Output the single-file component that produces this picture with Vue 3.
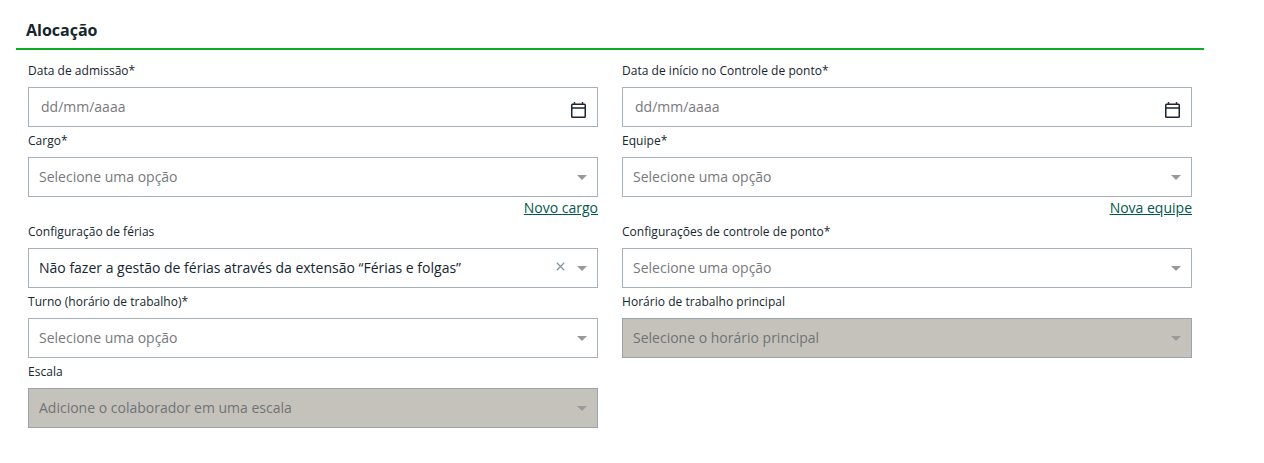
<script setup>
const rows = [
  [
    { label: 'Data de admissão*', type: 'date', text: 'dd/mm/aaaa' },
    { label: 'Data de início no Controle de ponto*', type: 'date', text: 'dd/mm/aaaa' }
  ],
  [
    { label: 'Cargo*', type: 'select', text: 'Selecione uma opção', link: 'Novo cargo' },
    { label: 'Equipe*', type: 'select', text: 'Selecione uma opção', link: 'Nova equipe' }
  ],
  [
    { label: 'Configuração de férias', type: 'select', text: 'Não fazer a gestão de férias através da extensão “Férias e folgas”', filled: true },
    { label: 'Configurações de controle de ponto*', type: 'select', text: 'Selecione uma opção' }
  ],
  [
    { label: 'Turno (horário de trabalho)*', type: 'select', text: 'Selecione uma opção' },
    { label: 'Horário de trabalho principal', type: 'select', text: 'Selecione o horário principal', disabled: true }
  ],
  [
    { label: 'Escala', type: 'select', text: 'Adicione o colaborador em uma escala', disabled: true }
  ]
]
</script>

<template>
  <section class="section">
    <h2 class="title">Alocação</h2>
    <div class="rows">
      <div v-for="(row, r) in rows" :key="r" class="row">
        <div v-for="field in row" :key="field.label" class="field">
          <label class="label">{{ field.label }}</label>
          <div class="control" :class="{ disabled: field.disabled, date: field.type === 'date' }">
            <span class="value" :class="{ filled: field.filled }">{{ field.text }}</span>
            <svg v-if="field.type === 'date'" class="calendar" viewBox="0 0 15 16" width="15" height="16" fill="none">
              <path d="M3.5 0V2.5M11.5 0V2.5" stroke="#3c3c3c" stroke-width="1.5" />
              <rect x="0.75" y="2.25" width="13.5" height="13" rx="0.8" stroke="#1d2530" stroke-width="1.5" />
              <path d="M1 6H14" stroke="#1d2530" stroke-width="1.5" />
            </svg>
            <template v-else>
              <svg v-if="field.filled" class="clear" viewBox="0 0 9 9" width="9" height="9" fill="none">
                <path d="M0.8 0.8L8.2 8.2M8.2 0.8L0.8 8.2" stroke="#87939c" stroke-width="1.25" />
              </svg>
              <span class="caret"></span>
            </template>
          </div>
          <div v-if="field.link" class="link-line"><a class="link">{{ field.link }}</a></div>
        </div>
      </div>
    </div>
  </section>
</template>

<style>
html, body { margin: 0; background: #fff; }
</style>

<style scoped>
.section {
  width: 1188px;
  margin-left: 16px;
  padding-top: 16px;
  font-family: "Open Sans", sans-serif;
}
.title {
  margin: 0;
  height: 34px;
  box-sizing: border-box;
  padding-left: 10px;
  font-size: 16px;
  line-height: 28px;
  font-weight: 700;
  color: #14262f;
  border-bottom: 2px solid #0cac27;
}
.rows {
  padding: 7px 12px 0;
}
.row {
  display: flex;
  gap: 24px;
}
.field {
  width: 570px;
  flex: none;
}
.label {
  display: block;
  height: 30px;
  font-size: 12px;
  line-height: 28px;
  letter-spacing: 0.03px;
  color: #14262f;
}
.control {
  display: flex;
  align-items: center;
  height: 40px;
  box-sizing: border-box;
  padding: 0 10px;
  border: 1px solid #a6b1ba;
  background: #fff;
}
.control.date {
  padding: 0 11px 0 12px;
}
.control.disabled {
  background: #c5c2bc;
  border-color: #99a4ac;
}
.value {
  flex: 1;
  font-size: 14px;
  line-height: 20px;
  color: #77797d;
  white-space: nowrap;
}
.value.filled {
  color: #14262f;
}
.disabled .value {
  color: #707376;
}
.calendar {
  flex: none;
  margin-top: 6px;
}
.clear {
  flex: none;
  margin: 0 12px 3px 0;
}
.caret {
  flex: none;
  width: 0;
  height: 0;
  border-left: 5px solid transparent;
  border-right: 5px solid transparent;
  border-top: 5px solid #999;
}
.link-line {
  height: 21px;
  text-align: right;
  line-height: 21px;
}
.link {
  font-size: 14px;
  color: #00594c;
  text-decoration: underline;
}
</style>
